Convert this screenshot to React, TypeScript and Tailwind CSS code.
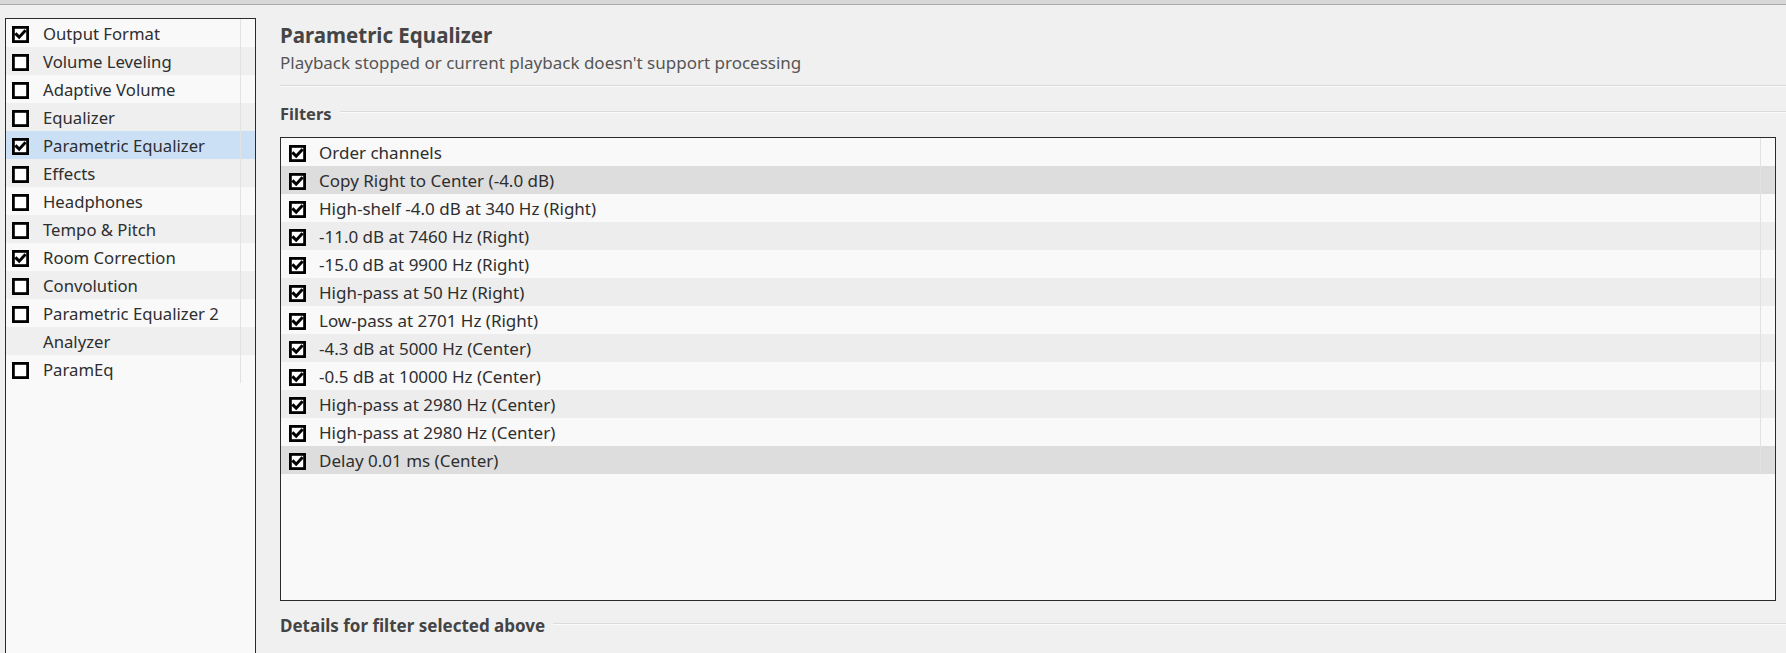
const panelItems: { label: string; checked: boolean | null; selected?: boolean }[] = [
  { label: "Output Format", checked: true },
  { label: "Volume Leveling", checked: false },
  { label: "Adaptive Volume", checked: false },
  { label: "Equalizer", checked: false },
  { label: "Parametric Equalizer", checked: true, selected: true },
  { label: "Effects", checked: false },
  { label: "Headphones", checked: false },
  { label: "Tempo & Pitch", checked: false },
  { label: "Room Correction", checked: true },
  { label: "Convolution", checked: false },
  { label: "Parametric Equalizer 2", checked: false },
  { label: "Analyzer", checked: null },
  { label: "ParamEq", checked: false },
];

const filters = [
  "Order channels",
  "Copy Right to Center (-4.0 dB)",
  "High-shelf -4.0 dB at 340 Hz (Right)",
  "-11.0 dB at 7460 Hz (Right)",
  "-15.0 dB at 9900 Hz (Right)",
  "High-pass at 50 Hz (Right)",
  "Low-pass at 2701 Hz (Right)",
  "-4.3 dB at 5000 Hz (Center)",
  "-0.5 dB at 10000 Hz (Center)",
  "High-pass at 2980 Hz (Center)",
  "High-pass at 2980 Hz (Center)",
  "Delay 0.01 ms (Center)",
];

function CheckBox({ checked }: { checked: boolean }) {
  return (
    <svg width="17" height="17" viewBox="0 0 17 17" className="shrink-0">
      <rect x="1.4" y="1.4" width="14.2" height="14.2" fill="#ffffff" stroke="#000000" strokeWidth="2.8" />
      {checked && (
        <path d="M4.4 8.4 L7.2 11.2 L12.6 5.3" fill="none" stroke="#000000" strokeWidth="3" strokeLinecap="square" />
      )}
    </svg>
  );
}

function SectionHeading({ text, big }: { text: string; big?: boolean }) {
  return (
    <div className="flex h-[24px] items-center gap-[8px]">
      <span
        className={
          "font-bold text-[#444444] whitespace-nowrap " + (big ? "text-[17px]" : "text-[16.5px]")
        }
      >
        {text}
      </span>
      <div className="mb-[5px] h-[2px] flex-1 border-t border-b border-t-[#dcdcdc] border-b-[#fbfbfb]" />
    </div>
  );
}

export default function App() {
  return (
    <div
      className="flex h-[653px] w-[1786px] flex-col overflow-hidden bg-[#f0f0f0]"
      style={{ fontFamily: '"Noto Sans", "Open Sans", sans-serif' }}
    >
      <div className="h-[5px] shrink-0 border-b border-[#ababab] bg-[#d8d8d8]" />
      <div className="flex min-h-0 flex-1">
        {/* left list */}
        <div className="ml-[5px] mt-[13px] flex w-[251px] flex-col border-x border-t border-[#2b2b2b] bg-[#f9f9f9]">
          {panelItems.map((item, i) => (
            <div
              key={item.label}
              className={
                "flex h-[28px] " +
                (item.selected ? "bg-[#cce0f5]" : i % 2 === 1 ? "bg-[#efefef]" : "bg-[#f9f9f9]")
              }
            >
              <div className="flex w-[235px] items-center border-r border-[#e2e2e2] pl-[6px] pt-[2px]">
                <div className="w-[17px] shrink-0">
                  {item.checked !== null && <CheckBox checked={item.checked} />}
                </div>
                <span className="ml-[14px] text-[16.7px] text-[#2e2e2e] whitespace-nowrap">{item.label}</span>
              </div>
              <div className="flex-1" />
            </div>
          ))}
        </div>

        {/* right side */}
        <div className="ml-[24px] flex min-w-0 flex-1 flex-col pt-[16px]">
          <div className="h-[28px] text-[20.5px] font-bold leading-[28px] text-[#454545]">Parametric Equalizer</div>
          <div className="mt-[2px] h-[23px] text-[17px] leading-[23px] text-[#555555]">
            Playback stopped or current playback doesn't support processing
          </div>
          <div className="mt-[11px] h-[2px] border-t border-b border-t-[#dadada] border-b-[#fbfbfb]" />
          <div className="mt-[15px]">
            <SectionHeading text="Filters" />
          </div>
          <div className="mr-[10px] mt-[11px] h-[464px] border border-[#2b2b2b] bg-[#f9f9f9]">
            {filters.map((f, i) => (
              <div
                key={i}
                className={
                  "flex h-[28px] " +
                  (i === 1 || i === 11 ? "bg-[#dddddd]" : i % 2 === 1 ? "bg-[#ededed]" : "bg-[#f9f9f9]")
                }
              >
                <div className="flex flex-1 items-center border-r border-[#e2e2e2] pl-[8px] pt-[2px]">
                  <CheckBox checked={true} />
                  <span className="ml-[13px] text-[17px] text-[#2e2e2e] whitespace-nowrap">{f}</span>
                </div>
                <div className="w-[14px]" />
              </div>
            ))}
          </div>
          <div className="mt-[13px]">
            <SectionHeading text="Details for filter selected above" big />
          </div>
        </div>
      </div>
    </div>
  );
}
